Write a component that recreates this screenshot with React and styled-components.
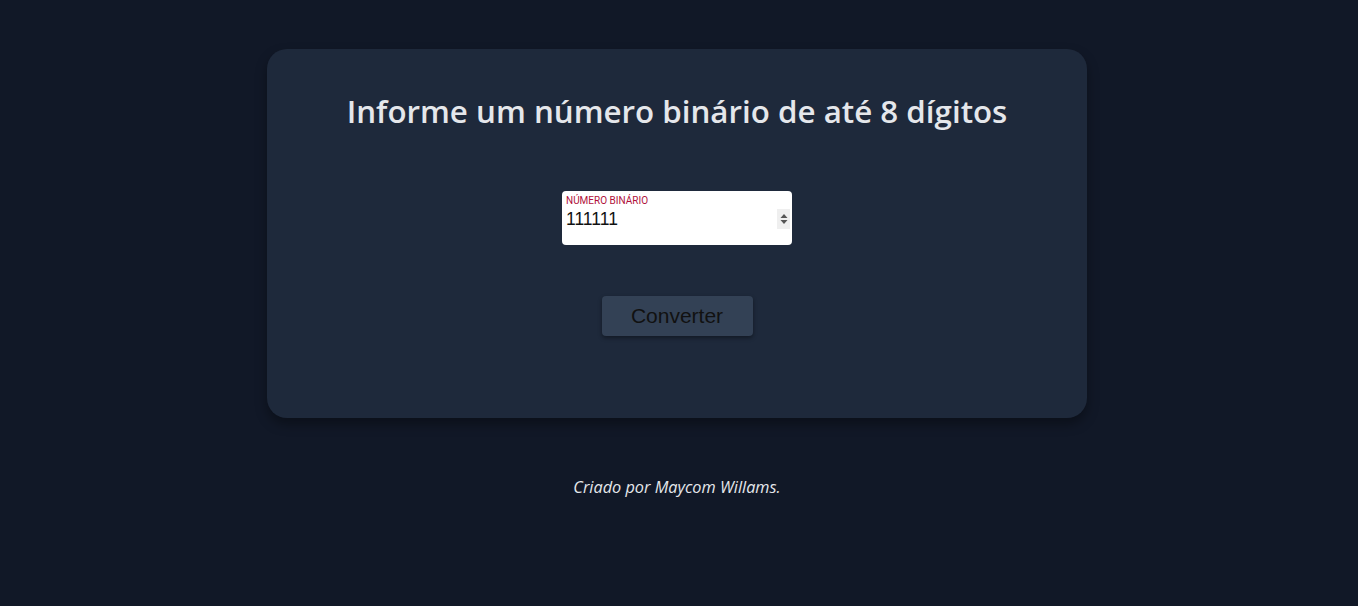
import styled, { createGlobalStyle } from "styled-components";

const GlobalStyle = createGlobalStyle`
  * { box-sizing: border-box; }
  body {
    margin: 0;
    background: #111827;
    font-family: "Open Sans", "Noto Sans", sans-serif;
  }
`;

const Page = styled.main`
  min-height: 606px;
  display: flex;
  flex-direction: column;
  align-items: center;
  padding: 49px 4px 0 0;
`;

const Card = styled.section`
  width: 820px;
  height: 369px;
  background: #1e293b;
  border-radius: 20px;
  box-shadow: 0 6px 12px rgba(0, 0, 0, 0.35);
  display: flex;
  flex-direction: column;
  align-items: center;
  padding-top: 40px;
`;

const Title = styled.h1`
  margin: 0;
  font-size: 31.3px;
  font-weight: 600;
  color: #e5e7eb;
  line-height: 44px;
`;

const Field = styled.label`
  margin-top: 58px;
  width: 230px;
  height: 54px;
  background: #fff;
  border-radius: 4px;
  padding: 4px 2px 0 4px;
  display: grid;
  grid-template-columns: minmax(0, 1fr) 13px;
  grid-template-rows: 12px 24px;
  column-gap: 4px;
  align-items: center;
`;

const Label = styled.span`
  grid-column: 1 / 3;
  font-family: Roboto, sans-serif;
  font-size: 10px;
  line-height: 12px;
  color: #b0103a;
  text-transform: uppercase;
`;

const Input = styled.input`
  width: 100%;
  border: none;
  outline: none;
  padding: 0;
  font-family: "Liberation Sans", Arial, sans-serif;
  font-size: 17.5px;
  color: #111;
  background: transparent;
  caret-color: #000;
  -moz-appearance: textfield;
  &::-webkit-inner-spin-button,
  &::-webkit-outer-spin-button {
    -webkit-appearance: none;
    margin: 0;
  }
`;

const Spinner = styled.span`
  width: 13px;
  height: 20px;
  background: #efefef;
  display: flex;
  align-items: center;
  justify-content: center;
`;

const Button = styled.button`
  margin-top: 51px;
  width: 151px;
  height: 40px;
  border: none;
  border-radius: 4px;
  background: #334155;
  color: #111;
  font-family: "Liberation Sans", Arial, sans-serif;
  font-size: 21px;
  box-shadow: 0 2px 4px rgba(0, 0, 0, 0.4);
  cursor: pointer;
`;

const Footer = styled.footer`
  margin-top: 58px;
  font-style: italic;
  font-size: 16.3px;
  color: #e5e7eb;
`;

export default function App() {
  return (
    <>
      <GlobalStyle />
      <Page>
        <Card>
          <Title>Informe um número binário de até 8 dígitos</Title>
          <Field>
            <Label>Número binário</Label>
            <Input type="number" defaultValue="111111" autoFocus />
            <Spinner>
              <svg width="8" height="14" viewBox="0 0 8 14">
                <path d="M4 2 L7.5 6 H0.5 Z" fill="#555" />
                <path d="M4 12 L7.5 8 H0.5 Z" fill="#555" />
              </svg>
            </Spinner>
          </Field>
          <Button>Converter</Button>
        </Card>
        <Footer>Criado por Maycom Willams.</Footer>
      </Page>
    </>
  );
}
